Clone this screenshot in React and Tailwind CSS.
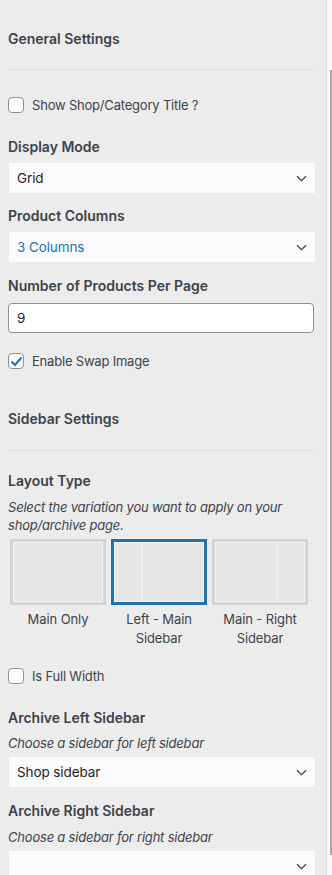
import React from 'react';

const font = { fontFamily: 'Inter, "Noto Sans", sans-serif' };

function Chevron() {
  return (
    <svg width="11" height="7" viewBox="0 0 11 7" fill="none">
      <path d="M1 1.2l4.5 4.5L10 1.2" stroke="#3c434a" strokeWidth="1.3" />
    </svg>
  );
}

function Checkbox({ checked, label }) {
  return (
    <label className="flex items-center gap-[8px] h-4">
      <span className="w-4 h-4 rounded-[4px] border border-[#8c8f94] bg-white flex items-center justify-center">
        {checked && (
          <svg width="13" height="11" viewBox="0 0 13 11" fill="none">
            <path d="M1.5 5.5l3.5 3.5L11.5 1.5" stroke="#2271b1" strokeWidth="2.2" />
          </svg>
        )}
      </span>
      <span className="text-[13px] tracking-[-0.2px] text-[#3c434a] translate-y-[1px]">{label}</span>
    </label>
  );
}

function Heading({ children, className = '' }) {
  return <h3 className={`text-[14px] leading-[20px] font-semibold text-[#3c434a] ${className}`}>{children}</h3>;
}

function Select({ value, blue, className = '' }) {
  return (
    <div className={`ml-[1px] h-[30px] bg-[#fbfbfe] flex items-center justify-between pl-[8px] pr-[8px] ${className}`}>
      <span className={`text-[13.5px] tracking-[-0.1px] ${blue ? 'text-[#2271b1]' : 'text-[#1d2327]'}`}>{value}</span>
      <Chevron />
    </div>
  );
}

function Desc({ children, className = '' }) {
  return <p className={`text-[13px] leading-[18px] italic tracking-[-0.2px] text-[#3c434a] ${className}`}>{children}</p>;
}

function LayoutBox({ selected, side, label }) {
  return (
    <div className="w-[96px] flex flex-col items-center">
      <div className={`w-[96px] h-[66px] border-[3px] ${selected ? 'border-[#2271b1]' : 'border-[#d4d4d4]'}`}>
        <div className="h-full flex border border-[#f5f5f5] bg-[#e5e5e5]">
          {side === 'left' && <div className="w-[28px] border-r-2 border-[#eeeeee]" />}
          <div className="flex-1" />
          {side === 'right' && <div className="w-[28px] border-l-2 border-[#eeeeee]" />}
        </div>
      </div>
      <div className="mt-[5px] text-[13px] leading-[19px] tracking-[-0.1px] text-[#3c434a] text-center w-[104px]">{label}</div>
    </div>
  );
}

export default function App() {
  return (
    <div className="w-[332px] h-[875px] overflow-hidden flex bg-[#ececed]" style={font}>
      <div className="w-[326px] pl-[8px] pr-[11px] pt-[29px]">
        <Heading>General Settings</Heading>
        <hr className="mt-[20px] border-0 border-t border-[#dcdcde] mr-[1px]" />
        <div className="mt-[27px]">
          <Checkbox label="Show Shop/Category Title ?" />
        </div>

        <Heading className="mt-[24px]">Display Mode</Heading>
        <Select value="Grid" className="mt-[6px]" />

        <Heading className="mt-[13px]">Product Columns</Heading>
        <Select value="3 Columns" blue className="mt-[6px]" />

        <Heading className="mt-[14px]">Number of Products Per Page</Heading>
        <div className="mt-[7px] h-[30px] mr-[1px] rounded-[4px] border border-[#8c8f94] bg-white flex items-center pl-[8px] text-[13.5px] text-[#1d2327]">
          9
        </div>
        <div className="mt-[20px]">
          <Checkbox checked label="Enable Swap Image" />
        </div>

        <Heading className="mt-[40px]">Sidebar Settings</Heading>
        <hr className="mt-[21px] border-0 border-t border-[#dcdcde] mr-[1px]" />

        <Heading className="mt-[20px]">Layout Type</Heading>
        <Desc className="mt-[7px]">Select the variation you want to apply on your shop/archive page.</Desc>
        <div className="mt-[5px] pl-[2px] flex gap-[5px]">
          <LayoutBox label="Main Only" />
          <LayoutBox selected side="left" label={<>Left - Main<br />Sidebar</>} />
          <LayoutBox side="right" label={<>Main - Right<br />Sidebar</>} />
        </div>
        <div className="mt-[20px]">
          <Checkbox label="Is Full Width" />
        </div>

        <Heading className="mt-[24px]">Archive Left Sidebar</Heading>
        <Desc className="mt-[6px]">Choose a sidebar for left sidebar</Desc>
        <Select value="Shop sidebar" className="mt-[5px]" />

        <Heading className="mt-[14px]">Archive Right Sidebar</Heading>
        <Desc className="mt-[7px]">Choose a sidebar for right sidebar</Desc>
        <Select value="" className="mt-[5px]" />
      </div>
      <div className="w-[6px] border-l border-[#dcdcde] bg-[#f9f9f9] flex justify-end">
        <div className="mt-[70px] w-[2px] h-[785px] bg-[#a9a9a9]" />
      </div>
    </div>
  );
}
